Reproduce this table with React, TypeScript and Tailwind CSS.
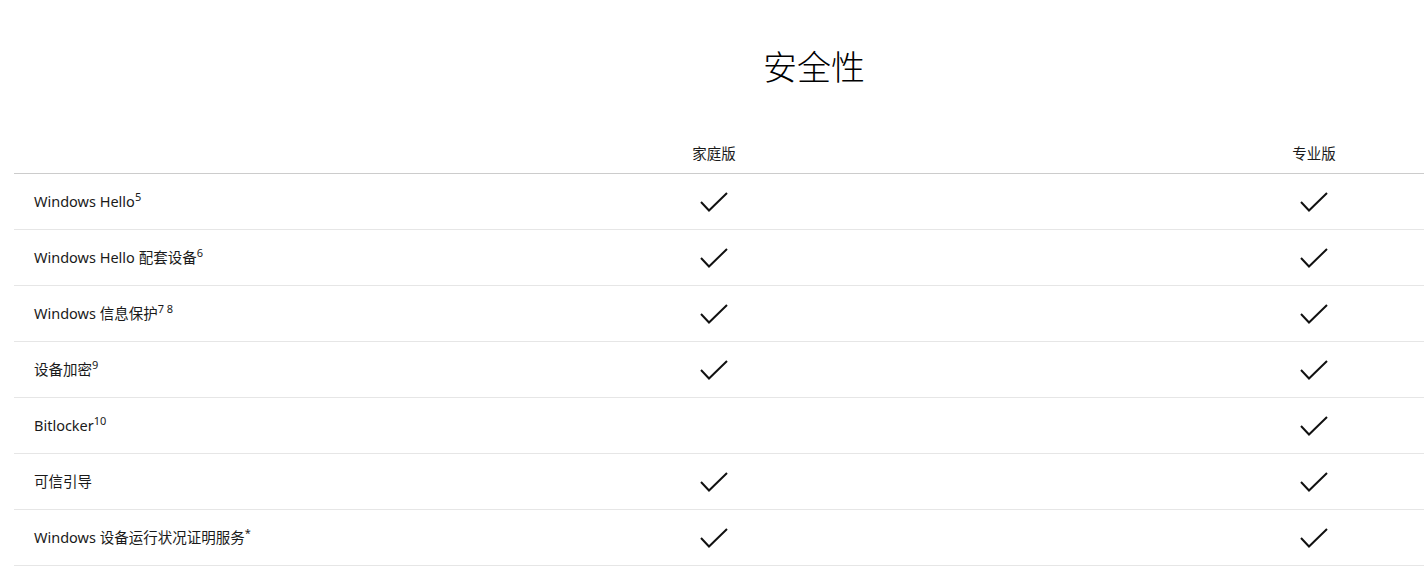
const rows: { label: string; sup?: string; home: boolean; pro: boolean }[] = [
  { label: "Windows Hello", sup: "5", home: true, pro: true },
  { label: "Windows Hello 配套设备", sup: "6", home: true, pro: true },
  { label: "Windows 信息保护", sup: "7 8", home: true, pro: true },
  { label: "设备加密", sup: "9", home: true, pro: true },
  { label: "Bitlocker", sup: "10", home: false, pro: true },
  { label: "可信引导", home: true, pro: true },
  { label: "Windows 设备运行状况证明服务", sup: "*", home: true, pro: true },
];

function Check() {
  return (
    <svg width="28" height="20" viewBox="0 0 28 20" fill="none">
      <path d="M1 10 L9 18.5 L27 1" stroke="#111" strokeWidth="2" />
    </svg>
  );
}

export default function App() {
  return (
    <div
      className="h-[579px] w-full overflow-hidden bg-white text-[#1a1a1a]"
      style={{ fontFamily: '"Segoe UI", "Noto Sans", "Noto Sans CJK SC", sans-serif' }}
    >
      <div className="ml-[14px] w-[1600px]">
        <h1 className="pt-[45px] text-center text-[34px] leading-[44px] font-light text-black">
          安全性
        </h1>

        <div className="mt-[45px] grid h-[40px] grid-cols-[400px_600px_600px] items-end border-b border-[#cccccc] pb-[10px] text-[14.5px] leading-[20px]">
          <div />
          <div className="text-center">家庭版</div>
          <div className="text-center">专业版</div>
        </div>

        {rows.map((r) => (
          <div
            key={r.label}
            className="grid h-[56px] grid-cols-[400px_600px_600px] items-center border-b border-[#e6e6e6] text-[14.5px]"
          >
            <div className="pl-[20px]">
              {r.label}
              {r.sup && <sup className="text-[11px]">{r.sup}</sup>}
            </div>
            <div className="flex justify-center">{r.home && <Check />}</div>
            <div className="flex justify-center">{r.pro && <Check />}</div>
          </div>
        ))}
      </div>
    </div>
  );
}
